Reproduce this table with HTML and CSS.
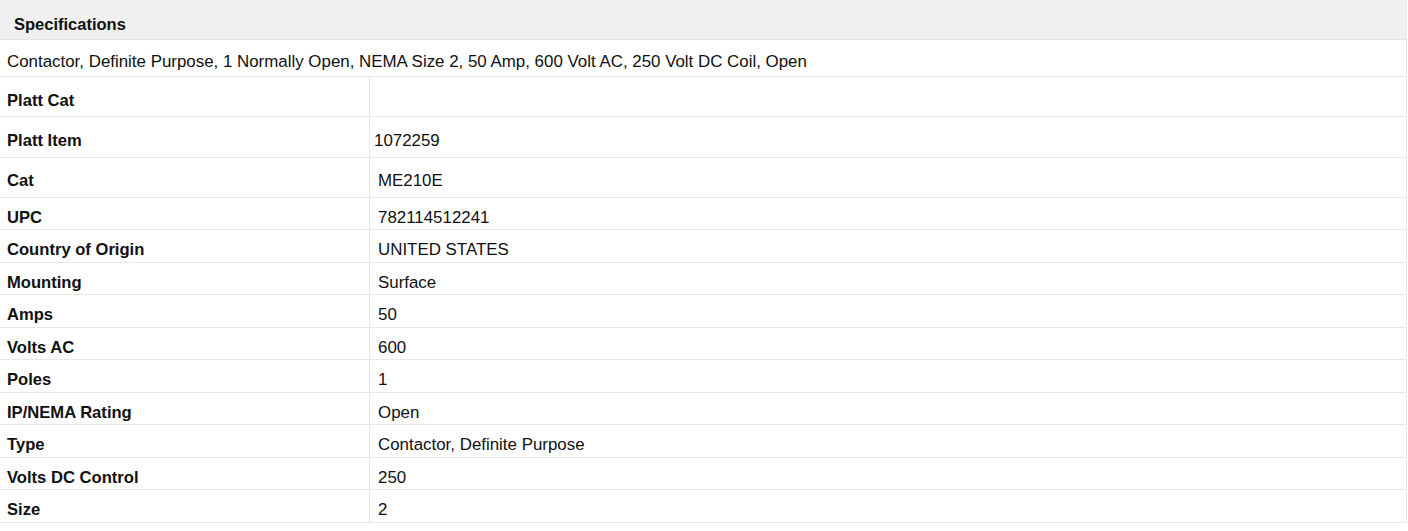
FILE: index.html
```html
<!DOCTYPE html>
<html>
<head>
<meta charset="utf-8">
<link rel="stylesheet" href="styles.css">
</head>
<body>
<div class="specs">
  <div class="specs-head">Specifications</div>
  <div class="specs-desc">Contactor, Definite Purpose, 1 Normally Open, NEMA Size 2, 50 Amp, 600 Volt AC, 250 Volt DC Coil, Open</div>
  <div class="row tall"><div class="label">Platt Cat</div><div class="value"></div></div>
  <div class="row tall"><div class="label">Platt Item</div><div class="value item">1072259</div></div>
  <div class="row tall"><div class="label">Cat</div><div class="value">ME210E</div></div>
  <div class="row"><div class="label">UPC</div><div class="value">782114512241</div></div>
  <div class="row"><div class="label">Country of Origin</div><div class="value">UNITED STATES</div></div>
  <div class="row"><div class="label">Mounting</div><div class="value">Surface</div></div>
  <div class="row"><div class="label">Amps</div><div class="value">50</div></div>
  <div class="row"><div class="label">Volts AC</div><div class="value">600</div></div>
  <div class="row"><div class="label">Poles</div><div class="value">1</div></div>
  <div class="row"><div class="label">IP/NEMA Rating</div><div class="value">Open</div></div>
  <div class="row"><div class="label">Type</div><div class="value">Contactor, Definite Purpose</div></div>
  <div class="row"><div class="label">Volts DC Control</div><div class="value">250</div></div>
  <div class="row"><div class="label">Size</div><div class="value">2</div></div>
</div>
</body>
</html>
```
FILE: styles.css
```css
html, body {
  margin: 0;
  padding: 0;
  background: #ffffff;
}
body {
  font-family: "Liberation Sans", Arial, sans-serif;
  color: #111111;
}
.specs {
  width: 1406px;
  border-right: 1px solid #e8e8e8;
}
.specs-head {
  height: 40px;
  box-sizing: border-box;
  padding-top: 9px;
  background: #f0f0f0;
  border-bottom: 1px solid #e3e3e3;
  font-weight: bold;
  font-size: 16.5px;
  padding-left: 14px;
  display: flex;
  align-items: center;
}
.specs-desc {
  height: 37px;
  box-sizing: border-box;
  padding-top: 8px;
  border-bottom: 1px solid #e8e8e8;
  font-size: 16.9px;
  padding-left: 7px;
  display: flex;
  align-items: center;
}
.row {
  display: grid;
  grid-template-columns: 370px 1fr;
  height: 32.5px;
  box-sizing: border-box;
  border-bottom: 1px solid #e8e8e8;
}
.row.tall {
  height: 40.33px;
}
.label {
  font-weight: bold;
  font-size: 16.6px;
  padding-left: 7px;
  border-right: 1px solid #e8e8e8;
  display: flex;
  align-items: center;
  padding-top: 8px;
}
.value {
  font-size: 16.9px;
  padding-left: 8px;
  display: flex;
  align-items: center;
  padding-top: 8px;
}
.value.item {
  padding-left: 4px;
}
```
